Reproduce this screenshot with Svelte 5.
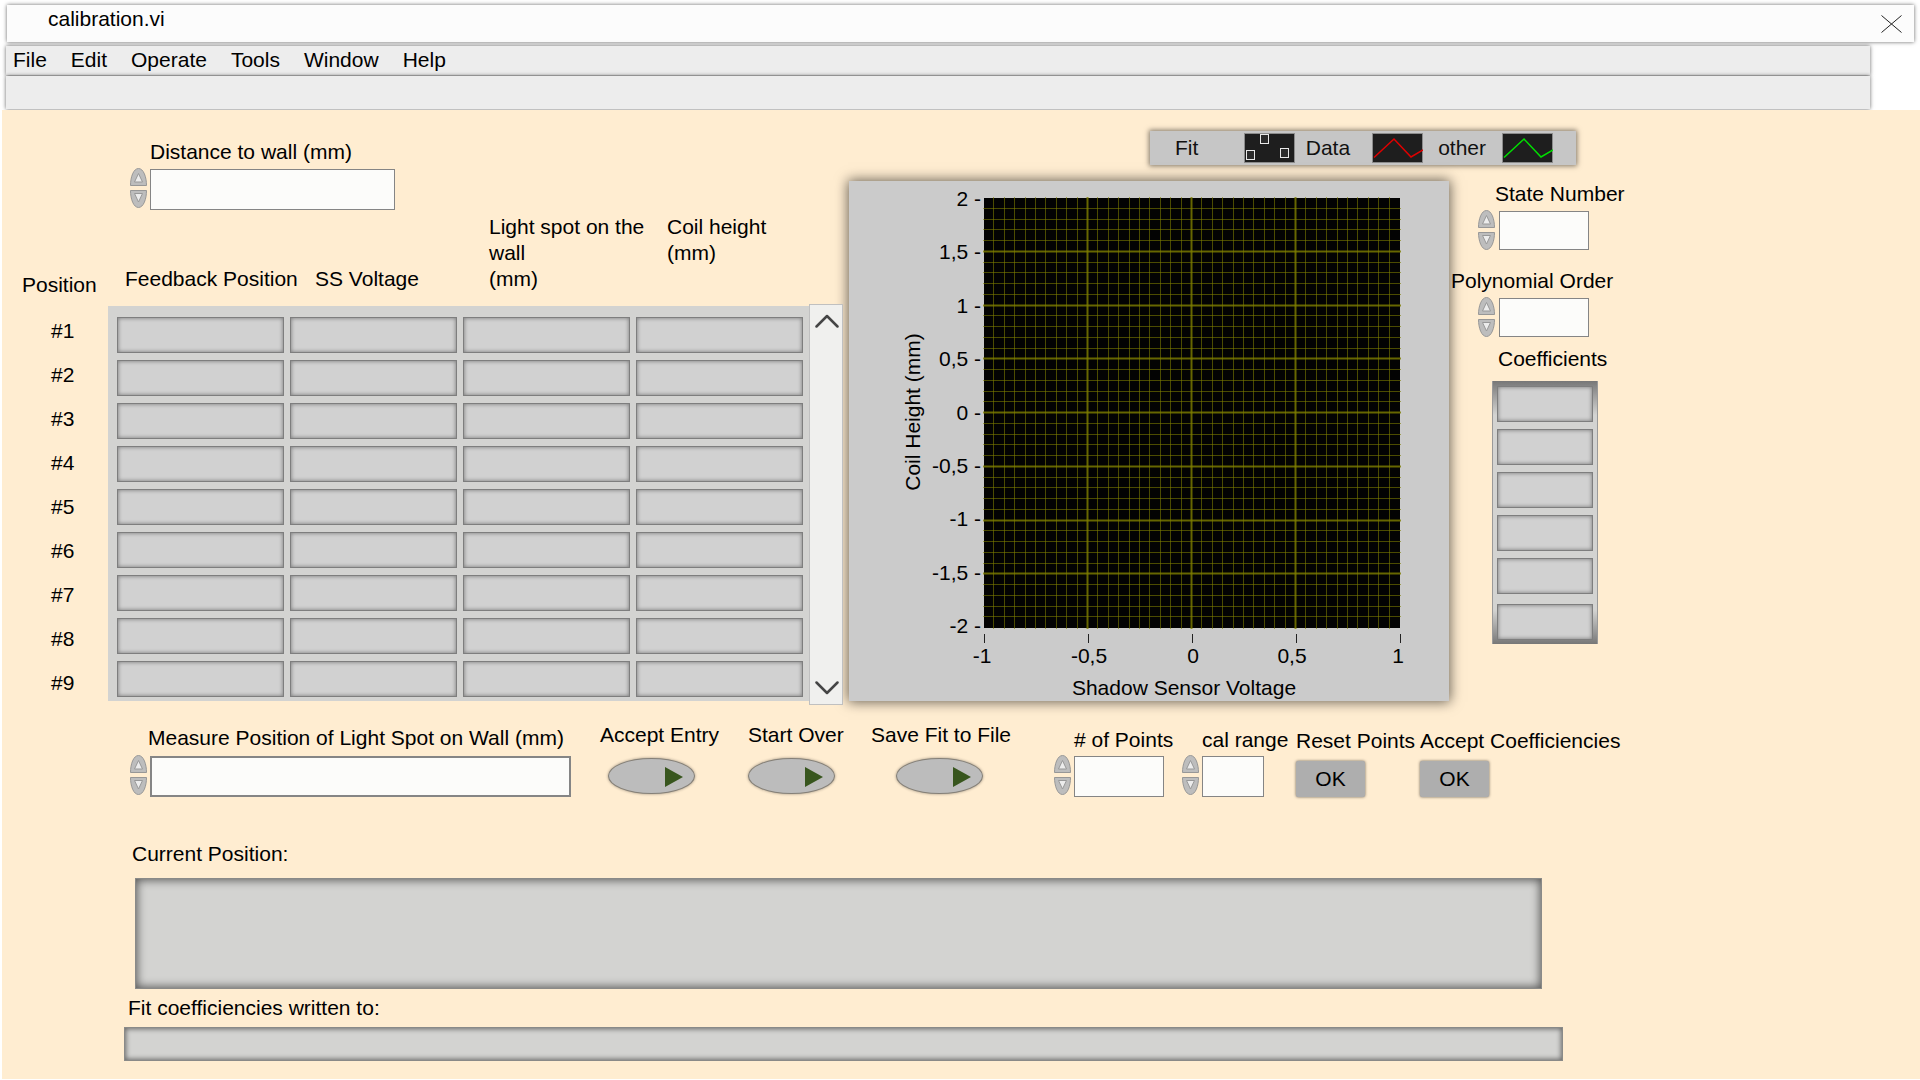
<script>
  const menus = ['File', 'Edit', 'Operate', 'Tools', 'Window', 'Help'];
  const rows = [1, 2, 3, 4, 5, 6, 7, 8, 9];
  const columns = ['Feedback Position', 'SS Voltage', 'Light spot on the wall (mm)', 'Coil height (mm)'];
  const coefficients = [0, 1, 2, 3, 4, 5];

  const plot = { left: 135, right: 551, top: 17, bottom: 447 };
  const yLabels = ['2', '1,5', '1', '0,5', '0', '-0,5', '-1', '-1,5', '-2'];
  const xLabels = [
    { text: '-1', x: 133 },
    { text: '-0,5', x: 240 },
    { text: '0', x: 344 },
    { text: '0,5', x: 443 },
    { text: '1', x: 549 }
  ];
  const xStep = (plot.right - plot.left) / 40;
  const yStep = (plot.bottom - plot.top) / 40;
  const vertical = Array.from({ length: 39 }, (_, i) => ({
    at: Math.round(plot.left + (i + 1) * xStep) - 0.5,
    major: (i + 1) % 10 === 0
  }));
  const horizontal = Array.from({ length: 39 }, (_, i) => ({
    at: Math.round(plot.top + (i + 1) * yStep) - 0.5,
    major: (i + 1) % 5 === 0
  }));
</script>

{#snippet spinner(name)}
  <span class="spinner">
    <button type="button" aria-label={`Increase ${name}`}>
      <svg width="17" height="18" viewBox="0 0 17 18">
        <path class="shell" d="M.5 17.5C.5 9 3.5.5 8.5.5s8 8.5 8 17z" />
        <path class="tip" d="M8.5 5.5l4 8.500h-8z" />
      </svg>
    </button>
    <button type="button" aria-label={`Decrease ${name}`}>
      <svg width="17" height="18" viewBox="0 0 17 18">
        <path class="shell" d="M.5.5c0 8.500 3 17 8 17s8-8.500 8-17z" />
        <path class="tip" d="M8.500 12l4-8.500h-8z" />
      </svg>
    </button>
  </span>
{/snippet}

{#snippet zigzag(color)}
  <svg class="swatch" width="51" height="30" viewBox="0 0 51 30">
    <rect x=".5" y=".5" width="50" height="29" fill="#1e1e1e" stroke="#8c8c8c" />
    <path d="M2 24.500L22 6l17 18 12-7" fill="none" stroke={color} stroke-width="1.500" />
  </svg>
{/snippet}

{#snippet push(id, label)}
  <div class="push {id}">
    <label for={id}>{label}</label>
    <button type="button" {id}>
      <svg width="18" height="20" viewBox="0 0 18 20"><path d="M0 0l18 10L0 20z" fill="#38561e" /></svg>
    </button>
  </div>
{/snippet}

<div class="window">
  <header>
    <div class="titlebar">
      <span>calibration.vi</span>
      <button type="button" class="close" aria-label="Close">
        <svg width="21" height="18" viewBox="0 0 21 18">
          <path d="M.5.5l20 17M20.500.5l-20 17" fill="none" stroke="#222" />
        </svg>
      </button>
    </div>
    <nav class="menubar">
      {#each menus as menu}
        <button type="button">{menu}</button>
      {/each}
    </nav>
    <div class="toolbar"></div>
  </header>

  <main>
    <div class="upper">
      <section class="entries">
        <div class="field distance">
          <label for="distance">Distance to wall (mm)</label>
          <div class="control">
            {@render spinner('distance to wall')}
            <input id="distance" type="text" />
          </div>
        </div>

        <div class="grid-area">
          <div class="positions">
            <span>Position</span>
            <ol>
              {#each rows as row}
                <li>#{row}</li>
              {/each}
            </ol>
          </div>
          <table>
            <thead>
              <tr>
                {#each columns as column}
                  <th scope="col">
                    {#if column.endsWith(' (mm)')}
                      {column.slice(0, -5)}<br />(mm)
                    {:else}
                      {column}
                    {/if}
                  </th>
                {/each}
              </tr>
            </thead>
            <tbody>
              {#each rows as row}
                <tr>
                  {#each columns as column}
                    <td></td>
                  {/each}
                </tr>
              {/each}
            </tbody>
          </table>
          <div class="scroll">
            <button type="button" aria-label="Scroll up">
              <svg width="24" height="14" viewBox="0 0 24 14"><path d="M1.500 12.500L12 2l10.500 10.500" /></svg>
            </button>
            <button type="button" aria-label="Scroll down">
              <svg width="24" height="14" viewBox="0 0 24 14"><path d="M1.500 1.500L12 12 22.500 1.500" /></svg>
            </button>
          </div>
        </div>
      </section>

      <section class="results">
        <div class="legend">
          <span class="fit">Fit</span>
          <svg class="swatch" width="51" height="30" viewBox="0 0 51 30">
            <rect x=".5" y=".5" width="50" height="29" fill="#1e1e1e" stroke="#8c8c8c" />
            <g fill="#2b2b2b" stroke="#e8e8e8">
              <rect x="2.500" y="17.500" width="8" height="9" />
              <rect x="16.500" y="1.500" width="8" height="9" />
              <rect x="36.500" y="15.500" width="8" height="9" />
            </g>
          </svg>
          <span class="data">Data</span>
          {@render zigzag('#e00000')}
          <span class="other">other</span>
          {@render zigzag('#00e000')}
        </div>

        <div class="result-row">
          <svg class="chart" viewBox="0 0 600 520" role="img" aria-label="Coil height against shadow sensor voltage">
            <rect x={plot.left} y={plot.top} width={plot.right - plot.left} height={plot.bottom - plot.top} fill="#030303" />
            {#each vertical as line}
              <line class:major={line.major} x1={line.at} x2={line.at} y1={plot.top - 1} y2={plot.bottom + 1} />
            {/each}
            {#each horizontal as line}
              <line class:major={line.major} x1={plot.left - 1} x2={plot.right + 1} y1={line.at} y2={line.at} />
            {/each}
            {#each yLabels as label, i}
              <text x="132" y={25 + Math.round(i * 53.4)} text-anchor="end">{label} -</text>
            {/each}
            {#each xLabels as label, i}
              {@const tick = Math.round(plot.left + i * 10 * xStep) + 0.5}
              <line class="tick" x1={tick} x2={tick} y1="453" y2="462" />
              <text x={label.x} y="482" text-anchor="middle">{label.text}</text>
            {/each}
            <text x="335" y="514" text-anchor="middle">Shadow Sensor Voltage</text>
            <text transform="translate(71 231) rotate(-90)" text-anchor="middle">Coil Height (mm)</text>
          </svg>

          <div class="settings">
            <div class="field state">
              <label for="state">State Number</label>
              <div class="control">
                {@render spinner('state number')}
                <input id="state" type="text" />
              </div>
            </div>
            <div class="field order">
              <label for="order">Polynomial Order</label>
              <div class="control">
                {@render spinner('polynomial order')}
                <input id="order" type="text" />
              </div>
            </div>
            <div class="coefficients">
              <span>Coefficients</span>
              <ul>
                {#each coefficients as index (index)}
                  <li></li>
                {/each}
              </ul>
            </div>
          </div>
        </div>
      </section>
    </div>

    <section class="actions">
      <div class="field measure">
        <label for="measure">Measure Position of Light Spot on Wall (mm)</label>
        <div class="control">
          {@render spinner('measured position')}
          <input id="measure" type="text" />
        </div>
      </div>
      {@render push('accept', 'Accept Entry')}
      {@render push('restart', 'Start Over')}
      {@render push('save', 'Save Fit to File')}
      <div class="field points">
        <label for="points"># of Points</label>
        <div class="control">
          {@render spinner('number of points')}
          <input id="points" type="text" />
        </div>
      </div>
      <div class="field range">
        <label for="range">cal range</label>
        <div class="control">
          {@render spinner('cal range')}
          <input id="range" type="text" />
        </div>
      </div>
      <div class="confirm">
        <label for="reset">Reset Points</label>
        <button type="button" id="reset">OK</button>
      </div>
      <div class="confirm">
        <label for="apply">Accept Coefficiencies</label>
        <button type="button" id="apply">OK</button>
      </div>
    </section>

    <section class="outputs">
      <label class="current" for="current">Current Position:</label>
      <output class="current-box" id="current"></output>
      <label class="written" for="written">Fit coefficiencies written to:</label>
      <output class="written-box" id="written"></output>
    </section>
  </main>
</div>

<style>
  :global(body) {
    margin: 0;
    background: #fff;
  }

  .window {
    display: flex;
    flex-direction: column;
    box-sizing: border-box;
    min-height: 100vh;
    padding: 5px 0 1px 2px;
    overflow: hidden;
    color: #000;
    font: 21px/26px "Liberation Sans", Arial, sans-serif;
  }

  .window *,
  .window *::before {
    box-sizing: border-box;
  }

  button,
  input {
    margin: 0;
    padding: 0;
    border: 0;
    background: none;
    color: inherit;
    font: inherit;
  }

  svg {
    display: block;
  }

  ol,
  ul {
    margin: 0;
    padding: 0;
    list-style: none;
  }

  label,
  span {
    white-space: nowrap;
  }

  .titlebar {
    display: flex;
    justify-content: space-between;
    height: 37px;
    margin: 0 6px 4px 5px;
    padding: 1px 12px 1px 41px;
    background: #fcfcfc;
    box-shadow: 0 0 4px rgba(0, 0, 0, 0.6);
  }

  .close {
    align-self: center;
  }

  .menubar,
  .toolbar {
    margin: 0 50px 0 4px;
    background: #ededed;
    box-shadow: 0 0 4px rgba(0, 0, 0, 0.6);
  }

  .menubar {
    display: flex;
    gap: 24px;
    height: 29px;
    padding: 1px 7px;
  }

  .menubar button {
    height: 26px;
  }

  .toolbar {
    height: 33px;
    margin-top: 1px;
  }

  main {
    flex: 1;
    margin-top: 1px;
    padding-bottom: 18px;
    background: #ffedd1;
  }

  .upper {
    display: grid;
    grid-template-columns: minmax(0, 841fr) minmax(0, 1071fr);
    gap: 6px;
  }

  .entries {
    padding-top: 29px;
  }

  .field,
  .push,
  .confirm {
    display: flex;
    flex-direction: column;
    align-items: flex-start;
  }

  .control {
    display: flex;
    gap: 3px;
  }

  .spinner {
    display: flex;
    flex-direction: column;
    gap: 4px;
    height: 40px;
  }

  .spinner .shell {
    fill: #bdbdbd;
    stroke: #979797;
  }

  .spinner .tip {
    fill: #ececec;
    stroke: #999;
  }

  input {
    height: 41px;
    margin-top: 1px;
    padding: 0 6px;
    border: 1px solid #858585;
    background: #fcfcfa;
  }

  .distance {
    gap: 3px;
    padding-left: 128px;
  }

  .distance label {
    margin-left: 20px;
  }

  .distance input {
    width: 245px;
  }

  .grid-area {
    display: flex;
    margin-top: 4px;
  }

  .positions {
    display: flex;
    flex-direction: column;
    gap: 20px;
    width: 106px;
    padding: 58px 0 0 20px;
  }

  .positions ol {
    display: flex;
    flex-direction: column;
    gap: 18px;
    padding-left: 29px;
  }

  table {
    display: block;
    flex: 1;
    min-width: 0;
  }

  thead,
  tbody {
    display: block;
  }

  thead tr {
    display: grid;
    grid-template-columns: 190fr 174fr 178fr 142fr;
    height: 78px;
    padding-left: 17px;
  }

  th {
    align-self: end;
    padding: 0;
    font-weight: 400;
    text-align: left;
  }

  th:last-child {
    align-self: start;
  }

  th:nth-child(3) {
    padding-right: 12px;
  }

  tbody {
    display: flex;
    flex-direction: column;
    gap: 7px;
    margin-top: 14px;
    padding: 11px 6px 4px 9px;
    background: #d3d3d1;
  }

  tbody tr {
    display: grid;
    grid-template-columns: repeat(4, minmax(0, 1fr));
    gap: 6px;
  }

  td,
  .coefficients li {
    height: 36px;
    padding: 0;
    border: 1px solid #7e7e7e;
    background: #d1d1d1;
    box-shadow: inset 0 0 4px rgba(0, 0, 0, 0.45);
  }

  .scroll {
    display: flex;
    flex-direction: column;
    justify-content: space-between;
    align-items: center;
    width: 34px;
    margin-top: 90px;
    margin-bottom: -4px;
    padding: 9px 0 9px 1px;
    border: 1px solid #c0c0c0;
    background: #f0f0ee;
    z-index: 1;
  }

  .scroll path {
    fill: none;
    stroke: #454545;
    stroke-width: 2.500;
    stroke-linecap: round;
    stroke-linejoin: round;
  }

  .results {
    padding-top: 21px;
  }

  .legend {
    display: flex;
    align-items: center;
    width: 426px;
    height: 34px;
    margin-left: 301px;
    padding: 0 23px 0 25px;
    background: #c6c6c6;
    box-shadow: 0 0 5px 1px rgba(0, 0, 0, 0.5);
    color: #111;
  }

  .fit {
    flex: 1;
  }

  .data {
    margin: 0 22px 0 11px;
  }

  .other {
    margin: 0 16px 0 15px;
  }

  .result-row {
    display: grid;
    grid-template-columns: minmax(0, 600fr) minmax(0, 471fr);
    margin-top: 15px;
  }

  .chart {
    width: 100%;
    height: auto;
    margin-top: 1px;
    background: #cbcbcb;
    box-shadow: 0 0 12px 1px rgba(0, 0, 0, 0.6);
  }

  .chart line {
    stroke: #808000;
    stroke-opacity: 0.58;
  }

  .chart .major {
    stroke-opacity: 0.8;
    stroke-width: 2;
  }

  .chart .tick {
    stroke: #222;
    stroke-opacity: 1;
  }

  .settings {
    z-index: 1;
  }

  .settings .field {
    gap: 3px;
    padding-top: 1px;
  }

  .settings .control {
    gap: 4px;
    margin-left: 29px;
  }

  .settings input {
    width: 90px;
    height: 39px;
  }

  .state label {
    margin-left: 46px;
  }

  .order {
    margin-top: 17px;
  }

  .order label {
    margin-left: 2px;
  }

  .coefficients {
    width: 106px;
    margin: 9px 0 0 43px;
  }

  .coefficients > span {
    margin-left: 6px;
  }

  .coefficients ul {
    display: flex;
    flex-direction: column;
    gap: 7px;
    margin-top: 9px;
    padding: 5px 4px 4px;
    border: solid #9a9a9a;
    border-width: 0 1px;
    background: linear-gradient(#777 0, #858585 5px, #d3d3d1 34px, #d3d3d1 calc(100% - 34px), #858585 calc(100% - 5px), #777 100%);
  }

  .coefficients li:last-child {
    margin-top: 3px;
  }

  .actions {
    display: grid;
    grid-template-columns: 470fr 148fr 123fr 183fr 128fr 114fr 124fr 500fr;
    align-items: end;
    margin-top: 21px;
    padding-left: 128px;
  }

  .actions > * {
    min-width: 0;
  }

  .measure {
    gap: 4px;
  }

  .measure label {
    margin-left: 18px;
  }

  .measure input {
    width: 421px;
    border-width: 2px;
  }

  .push {
    gap: 10px;
    padding-bottom: 3px;
  }

  .push button {
    display: flex;
    justify-content: flex-end;
    align-items: center;
    width: 87px;
    height: 36px;
    padding: 2px 11px 0 0;
    border: 1px solid #858078;
    border-radius: 50%;
    background: #bcbcbc;
    box-shadow: 0 0 3px rgba(0, 0, 0, 0.4);
  }

  .accept button {
    margin-left: 8px;
  }

  .save button {
    margin-left: 25px;
  }

  .points,
  .range {
    gap: 2px;
  }

  .points label,
  .range label {
    margin-left: 20px;
  }

  .points input {
    width: 90px;
  }

  .range input {
    width: 62px;
  }

  .confirm {
    gap: 7px;
  }

  .confirm button {
    width: 69px;
    height: 36px;
    border-radius: 2px;
    background: #aeaeae;
    box-shadow: 0 0 3px rgba(0, 0, 0, 0.6);
  }

  .outputs {
    display: flex;
    flex-direction: column;
    margin-top: 44px;
  }

  .outputs label {
    align-self: flex-start;
  }

  .outputs output {
    background: #d3d3d1;
  }

  .current {
    margin-left: 130px;
  }

  .current-box {
    height: 111px;
    margin: 11px 378px 6px 133px;
    border: 1px solid #8a8a88;
    box-shadow: inset 0 0 10px 1px rgba(0, 0, 0, 0.6);
  }

  .written {
    margin-left: 126px;
  }

  .written-box {
    height: 34px;
    margin: 6px 357px 0 122px;
    border: 1px solid #8a8a88;
    box-shadow: inset 0 0 5px 1px rgba(0, 0, 0, 0.5);
  }
</style>
